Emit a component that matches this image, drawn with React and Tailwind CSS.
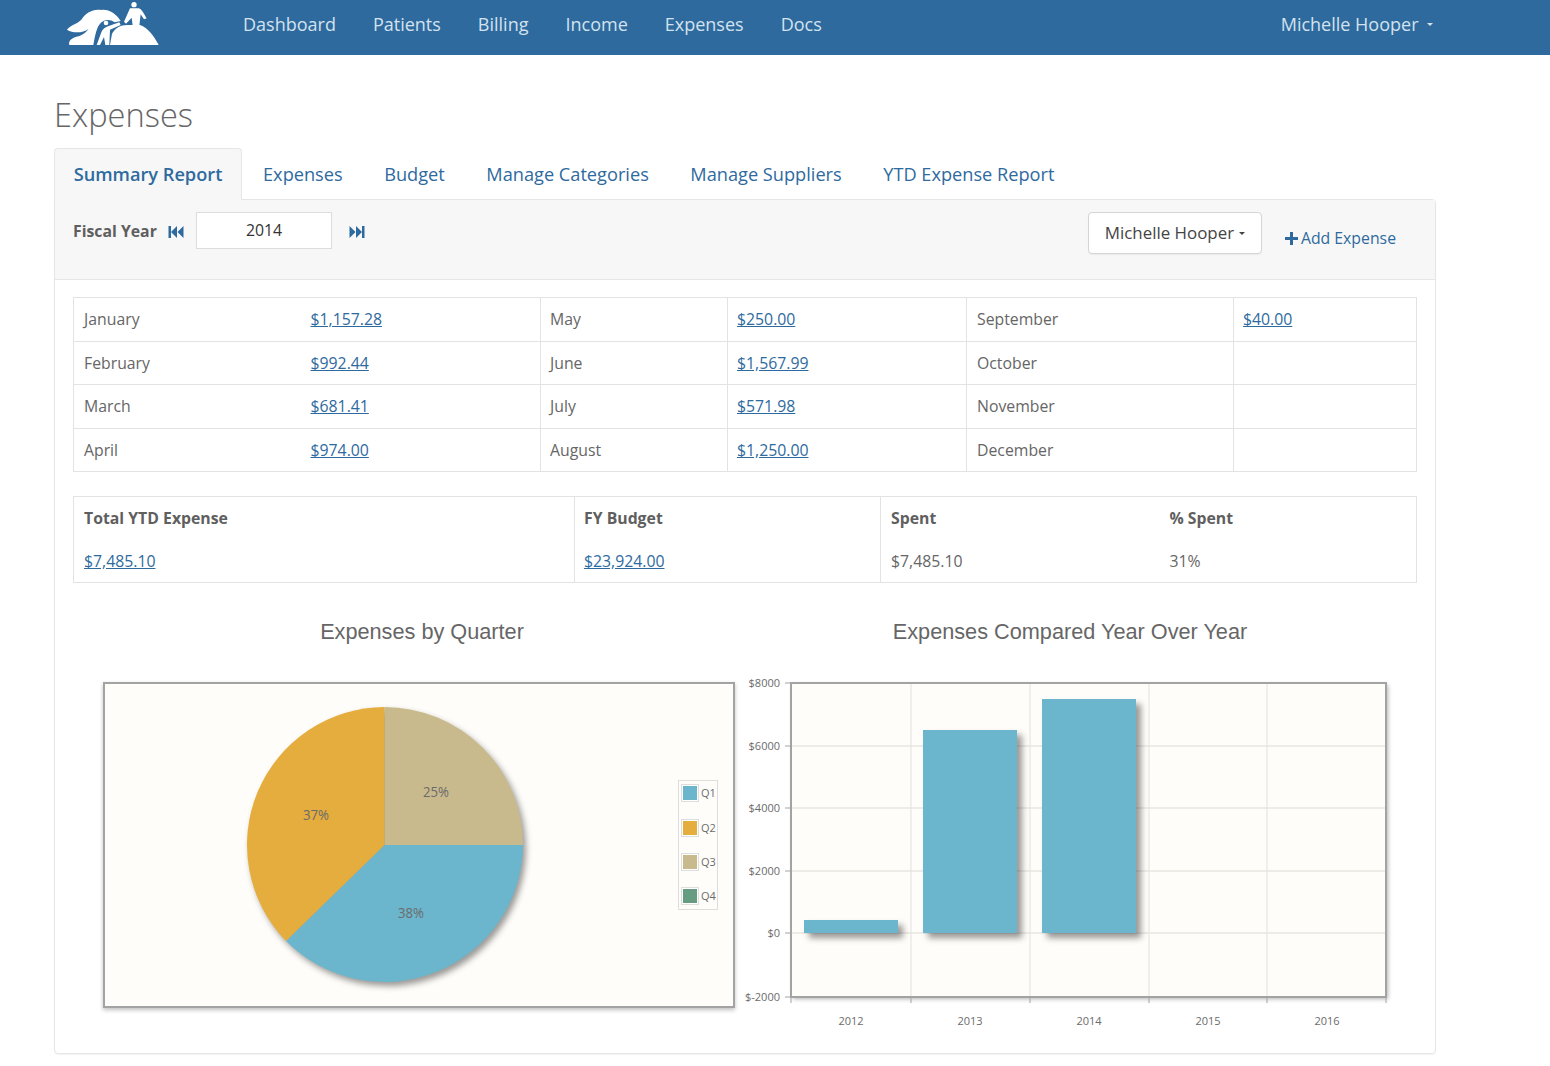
import { Fragment } from 'react'

const NAV = ['Dashboard', 'Patients', 'Billing', 'Income', 'Expenses', 'Docs']
const TABS = ['Expenses', 'Budget', 'Manage Categories', 'Manage Suppliers', 'YTD Expense Report']

const MONTHS = [
  ['January', '$1,157.28', 'May', '$250.00', 'September', '$40.00'],
  ['February', '$992.44', 'June', '$1,567.99', 'October', ''],
  ['March', '$681.41', 'July', '$571.98', 'November', ''],
  ['April', '$974.00', 'August', '$1,250.00', 'December', ''],
]

const LEGEND = [
  { label: 'Q1', color: '#6bb6cc', y: 793 },
  { label: 'Q2', color: '#e5ac3e', y: 828 },
  { label: 'Q3', color: '#c9ba8d', y: 862 },
  { label: 'Q4', color: '#669d82', y: 896 },
]

const Y_TICKS = [
  { label: '$8000', y: 683 },
  { label: '$6000', y: 746 },
  { label: '$4000', y: 808 },
  { label: '$2000', y: 871 },
  { label: '$0', y: 933 },
  { label: '$-2000', y: 997 },
]

const BARS = [
  { x: 804, top: 920 },
  { x: 923, top: 730 },
  { x: 1042, top: 699 },
]

const YEARS = [
  { label: '2012', x: 851 },
  { label: '2013', x: 970 },
  { label: '2014', x: 1089 },
  { label: '2015', x: 1208 },
  { label: '2016', x: 1327 },
]

function Logo() {
  return (
    <svg width="95" height="45" viewBox="200 0 285 135" fill="#ffffff" className="ml-[66px] mt-[1px] shrink-0">
      <path d="M203 86C212 72 232 70 246 56C258 36 282 22 306 27C328 24 350 38 364 60L346 64C332 54 316 54 304 66C292 78 288 100 282 132L210 132C206 120 218 110 238 106C250 102 262 92 268 84C250 96 222 98 203 86Z" />
      <circle cx="320" cy="66" r="7" />
      <path d="M360 64L364 72L332 86L330 132L318 132L314 108L302 132L292 132L306 94C310 84 318 78 328 75Z" />
      <path d="M332 132L338 98C348 82 362 72 384 72L422 72C446 80 464 106 478 132Z" />
      <circle cx="404" cy="11" r="8" />
      <path d="M392 22L418 22C428 24 434 40 442 52L434 55L424 40L420 74L400 74L397 50L380 68L374 62Z" />
    </svg>
  )
}

function StepIcon({ flip }) {
  return (
    <svg width="16" height="14" viewBox="0 0 16 14" fill="#2e6a9e" className={flip ? 'rotate-180' : ''}>
      <rect x="0.5" y="1" width="2.5" height="12" />
      <path d="M9 1L9 13L3 7Z" />
      <path d="M15.5 1L15.5 13L9.5 7Z" />
    </svg>
  )
}

function Caret({ className }) {
  return <span className={`inline-block w-0 h-0 border-x-[3.5px] border-x-transparent border-t-[3.5px] ${className}`} />
}

function MoneyLink({ children }) {
  return <a className="text-[#2e6a9e] underline">{children}</a>
}

function PieChart() {
  return (
    <svg width="640" height="334" viewBox="100 680 640 334" className="shrink-0">
      <rect x="104" y="683" width="630" height="324" fill="#fffdf9" stroke="#a3a3a3" strokeWidth="2" className="drop-shadow-[0_2px_2px_rgba(0,0,0,0.25)]" />
      <g className="drop-shadow-[3px_4px_3px_rgba(0,0,0,0.4)]">
        <path d="M384.5 845L384.5 707A138.5 138 0 0 1 523 845Z" fill="#c9ba8d" />
        <path d="M384.5 845L523 845A138.5 138 0 0 1 286 941Z" fill="#6bb6cc" />
        <path d="M384.5 845L286 941A138.5 138 0 0 1 384.5 707Z" fill="#e5ac3e" />
      </g>
      <g fontSize="14" fill="#6b6b6b" textAnchor="middle" fontFamily="'Open Sans', sans-serif">
        <text x="436" y="797" textLength="26" lengthAdjust="spacingAndGlyphs">25%</text>
        <text x="316" y="820" textLength="26" lengthAdjust="spacingAndGlyphs">37%</text>
        <text x="411" y="918" textLength="26" lengthAdjust="spacingAndGlyphs">38%</text>
      </g>
      <rect x="678.5" y="780.5" width="39" height="129" fill="#fffdf9" stroke="#dedede" />
      {LEGEND.map(item => (
        <Fragment key={item.label}>
          <rect x="681.5" y={item.y - 8.5} width="17" height="17" fill="#ffffff" stroke="#dedede" />
          <rect x="683" y={item.y - 7} width="14" height="14" fill={item.color} />
          <text x="701" y={item.y + 4} fontSize="11" fill="#6b6b6b" fontFamily="'Open Sans', sans-serif">{item.label}</text>
        </Fragment>
      ))}
    </svg>
  )
}

function BarChart() {
  return (
    <svg width="660" height="364" viewBox="740 672 660 364" className="shrink-0">
      <rect x="791" y="683" width="595" height="314" fill="#fffdf9" className="drop-shadow-[2px_2px_2px_rgba(0,0,0,0.3)]" />
      {Y_TICKS.slice(1, 5).map(t => (
        <line key={t.label} x1="791" x2="1386" y1={t.y} y2={t.y} stroke="#e8e6e1" strokeWidth="1.5" />
      ))}
      {[911, 1030, 1149, 1267].map(x => (
        <line key={x} x1={x} x2={x} y1="683" y2="997" stroke="#e3e1dc" strokeWidth="1" />
      ))}
      <rect x="791" y="683" width="595" height="314" fill="none" stroke="#a3a3a3" strokeWidth="2" />
      {Y_TICKS.map(t => (
        <Fragment key={t.label}>
          <line x1="785" x2="791" y1={t.y} y2={t.y} stroke="#a3a3a3" />
          <text x="780" y={t.y + 4} textAnchor="end" fontSize="11" fill="#6b6b6b" fontFamily="'Open Sans', sans-serif">{t.label}</text>
        </Fragment>
      ))}
      {[791, 911, 1030, 1149, 1267, 1386].map(x => (
        <line key={x} x1={x} x2={x} y1="997" y2="1003" stroke="#a3a3a3" />
      ))}
      {BARS.map(b => (
        <rect
          key={b.x}
          x={b.x}
          y={b.top}
          width="94"
          height={933 - b.top}
          fill="#6bb6cc"
          className="drop-shadow-[5px_5px_3px_rgba(0,0,0,0.4)]"
        />
      ))}
      {YEARS.map(y => (
        <text key={y.label} x={y.x} y="1025" textAnchor="middle" fontSize="11" fill="#6b6b6b" fontFamily="'Open Sans', sans-serif">{y.label}</text>
      ))}
    </svg>
  )
}

export default function App() {
  return (
    <div className="min-h-[1066px] bg-white font-['Open_Sans',sans-serif] text-[15.8px] text-[#666666]">
      <header className="flex h-[55px] items-start bg-[#2e6a9e] text-[18px] text-[#d3e2ee]">
        <Logo />
        <nav className="ml-[82px] flex h-[48px] items-center gap-[37px]">
          {NAV.map(item => <a key={item}>{item}</a>)}
        </nav>
        <div className="ml-[459px] flex h-[48px] items-center gap-[8px]">
          Michelle Hooper
          <Caret className="border-t-[#d3e2ee]" />
        </div>
      </header>

      <main className="ml-[54px] w-[1382px]">
        <h1 className="mt-[37px] h-[56px] text-[32.6px] font-light leading-[46px] text-[#666666]">Expenses</h1>

        <div className="flex h-[51px] items-stretch text-[18.2px] text-[#2e6a9e]">
          <div className="relative z-10 -mb-px flex w-[188px] items-center justify-center rounded-t border border-b-0 border-[#e6e6e6] bg-[#f7f7f7] font-semibold">
            Summary Report
          </div>
          <div className="ml-[21px] flex items-center gap-[41.5px] pt-[2px]">
            {TABS.map(t => <a key={t}>{t}</a>)}
          </div>
        </div>

        <section className="h-[855px] rounded-b rounded-tr border border-[#e6e6e6] shadow-[0_1px_1px_rgba(0,0,0,0.05)]">
          <div className="flex h-[80px] justify-between border-b border-[#e6e6e6] bg-[#f7f7f7] pl-[18px] pr-[39px]">
            <div className="flex h-[50px] items-center pt-[13px]">
              <span className="w-[95px] font-bold text-[#5f5f5f]">Fiscal Year</span>
              <StepIcon />
              <span className="ml-[12px] flex h-[37px] w-[136px] -translate-y-[1px] items-center justify-center border border-[#dcdcdc] bg-white text-[#333333]">2014</span>
              <span className="ml-[17px]"><StepIcon flip /></span>
            </div>
            <div className="flex items-start pt-[12px]">
              <button className="flex h-[42px] w-[174px] items-center justify-center gap-[5px] rounded border border-[#d5d5d5] bg-white text-[16.9px] text-[#444444] shadow-[0_1px_1px_rgba(0,0,0,0.05)]">
                Michelle Hooper
                <Caret className="border-t-[#444444]" />
              </button>
              <a className="ml-[23px] mt-[15px] flex items-center gap-[3px] text-[#2e6a9e]">
                <svg width="13" height="13" viewBox="0 0 13 13" fill="#2e6a9e">
                  <rect x="5" width="3" height="13" />
                  <rect y="5" width="13" height="3" />
                </svg>
                Add Expense
              </a>
            </div>
          </div>

          <div className="px-[18px] pt-[17px]">
            <table className="w-[1343px] table-fixed border-collapse border border-[#e3e3e3]">
              <colgroup>
                <col className="w-[227px]" />
                <col className="w-[240px]" />
                <col className="w-[187px]" />
                <col className="w-[239px]" />
                <col className="w-[267px]" />
                <col className="w-[183px]" />
              </colgroup>
              <tbody>
                {MONTHS.map(row => (
                  <tr key={row[0]} className="h-[43.5px] border-t border-[#e3e3e3] [&>td]:pt-[2px]">
                    <td className="px-[10px]">{row[0]}</td>
                    <td className="border-r border-[#e3e3e3] pl-[10px]"><MoneyLink>{row[1]}</MoneyLink></td>
                    <td className="border-r border-[#e3e3e3] px-[9px]">{row[2]}</td>
                    <td className="border-r border-[#e3e3e3] pl-[9px]"><MoneyLink>{row[3]}</MoneyLink></td>
                    <td className="border-r border-[#e3e3e3] px-[10px]">{row[4]}</td>
                    <td className="pl-[9px]">{row[5] && <MoneyLink>{row[5]}</MoneyLink>}</td>
                  </tr>
                ))}
              </tbody>
            </table>

            <table className="mt-[24px] w-[1343px] table-fixed border-collapse border border-[#e3e3e3]">
              <colgroup>
                <col className="w-[501px]" />
                <col className="w-[306px]" />
                <col className="w-[279px]" />
                <col className="w-[257px]" />
              </colgroup>
              <tbody>
                <tr className="h-[43px] font-bold text-[#5f5f5f] [&>td]:pt-[2px]">
                  <td className="border-r border-[#e3e3e3] px-[10px]">Total YTD Expense</td>
                  <td className="border-r border-[#e3e3e3] px-[9px]">FY Budget</td>
                  <td className="px-[10px]">Spent</td>
                  <td className="px-[10px]">% Spent</td>
                </tr>
                <tr className="h-[43px] [&>td]:pt-[2px]">
                  <td className="border-r border-[#e3e3e3] px-[10px]"><MoneyLink>$7,485.10</MoneyLink></td>
                  <td className="border-r border-[#e3e3e3] px-[9px]"><MoneyLink>$23,924.00</MoneyLink></td>
                  <td className="px-[10px]">$7,485.10</td>
                  <td className="px-[10px]">31%</td>
                </tr>
              </tbody>
            </table>

            <div className="mt-[33px] flex h-[33px] items-center text-[21.7px] text-[#666666] font-['Liberation_Sans',sans-serif]">
              <h2 className="w-[698px] text-center">Expenses by Quarter</h2>
              <h2 className="w-[598px] text-center">Expenses Compared Year Over Year</h2>
            </div>

            <div className="ml-[27px] mt-[15px] flex items-start">
              <div className="pt-[16px]"><PieChart /></div>
              <div className="pt-[8px]"><BarChart /></div>
            </div>
          </div>
        </section>
      </main>
    </div>
  )
}
